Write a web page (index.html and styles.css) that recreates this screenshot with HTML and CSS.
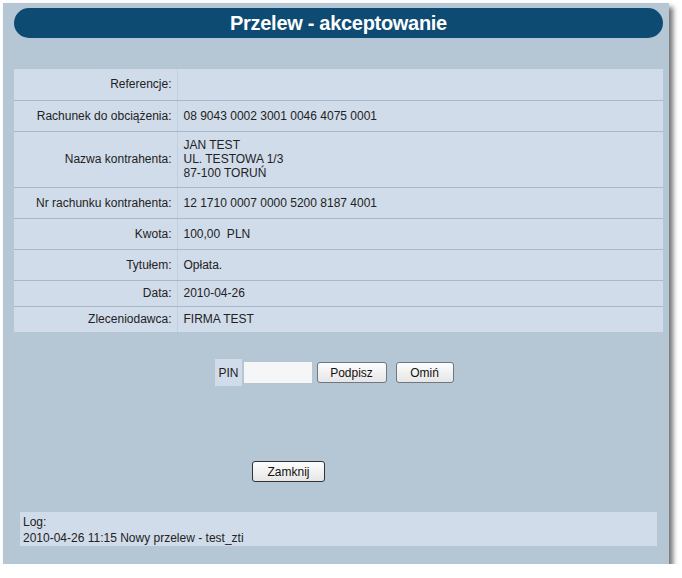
FILE: index.html
```html
<!DOCTYPE html>
<html lang="pl">
<head>
    <meta charset="UTF-8">
    <title>Przelew - akceptowanie</title>
    <link rel="stylesheet" href="styles.css">
</head>
<body>
    <div class="panel">
        <h1 class="title">Przelew - akceptowanie</h1>

        <!-- Transfer details -->
        <table class="details">
            <tr class="row-tall"><th>Referencje:</th><td></td></tr>
            <tr class="row-tall"><th>Rachunek do obciążenia:</th><td>08 9043 0002 3001 0046 4075 0001</td></tr>
            <tr class="row-address"><th>Nazwa kontrahenta:</th><td>JAN TEST<br>UL. TESTOWA 1/3<br>87-100 TORUŃ</td></tr>
            <tr class="row-tall"><th>Nr rachunku kontrahenta:</th><td>12 1710 0007 0000 5200 8187 4001</td></tr>
            <tr class="row-tall"><th>Kwota:</th><td>100,00&nbsp; PLN</td></tr>
            <tr class="row-tall"><th>Tytułem:</th><td>Opłata.</td></tr>
            <tr class="row-short"><th>Data:</th><td>2010-04-26</td></tr>
            <tr class="row-short"><th>Zleceniodawca:</th><td>FIRMA TEST</td></tr>
        </table>

        <!-- Signing -->
        <div class="sign">
            <span class="pin-label">PIN</span>
            <input type="password" class="pin-input">
            <button class="btn btn-sign">Podpisz</button>
            <button class="btn btn-skip">Omiń</button>
        </div>

        <div class="close-row">
            <button class="btn btn-close">Zamknij</button>
        </div>

        <div class="log">
            <div>Log:</div>
            <div>2010-04-26 11:15 Nowy przelew - test_zti</div>
        </div>
    </div>
</body>
</html>
```

FILE: styles.css
```css
* {
    margin: 0;
    padding: 0;
    box-sizing: border-box;
}

body {
    font-family: "Liberation Sans", Arial, sans-serif;
    font-size: 12px;
    color: #222;
    background: #fff;
}

.panel {
    width: 666px;
    height: 561px;
    margin: 3px 0 0 3px;
    padding: 5px 6px 0 11px;
    background: #b5c7d5;
    box-shadow: 4px 4px 5px rgba(0, 0, 0, 0.55);
}

.title {
    height: 30px;
    background: #0d4b72;
    border-radius: 15px;
    color: #fff;
    font-size: 20px;
    font-weight: bold;
    line-height: 30px;
    text-align: center;
    letter-spacing: -0.3px;
}

.details {
    width: 649px;
    margin-top: 31px;
    border-collapse: collapse;
    background: #d1dcea;
}

.details th,
.details td {
    border-bottom: 1px solid #a8b8c9;
    font-weight: normal;
    vertical-align: middle;
    line-height: 14px;
}

.details tr:last-child th,
.details tr:last-child td {
    border-bottom: none;
}

.details th {
    width: 163px;
    padding-right: 5px;
    text-align: right;
    border-right: 1px solid #c2cfdd;
}

.details td {
    padding-left: 6px;
}

.row-tall { height: 31px; }
.row-address { height: 56px; }
.row-short { height: 26px; }

.sign {
    display: flex;
    justify-content: center;
    align-items: center;
    margin-top: 27px;
    padding-right: 8px;
}

.pin-label {
    display: flex;
    align-items: center;
    height: 27px;
    padding: 0 3px;
    background: #d1dcea;
    font-size: 12px;
}

.pin-input {
    width: 70px;
    height: 23px;
    margin-left: 1px;
    border: 1px solid #b8c4cf;
    background: #f4f6f8;
}

.btn {
    height: 21px;
    padding: 0 10px;
    font-family: "Liberation Sans", Arial, sans-serif;
    font-size: 12px;
    color: #111;
    border: 1px solid #6f7780;
    border-radius: 3px;
    background: linear-gradient(to bottom, #fdfdfd, #e6e6e6);
}

.btn-sign {
    width: 70px;
    margin-left: 4px;
}

.btn-skip {
    width: 58px;
    margin-left: 9px;
}

.close-row {
    margin-top: 75px;
    padding-left: 238px;
}

.btn-close {
    width: 73px;
    border-color: #333;
}

.log {
    width: 637px;
    height: 34px;
    margin: 30px 0 0 6px;
    padding: 2px 0 0 3px;
    background: #d1dcea;
    line-height: 16px;
}
```
